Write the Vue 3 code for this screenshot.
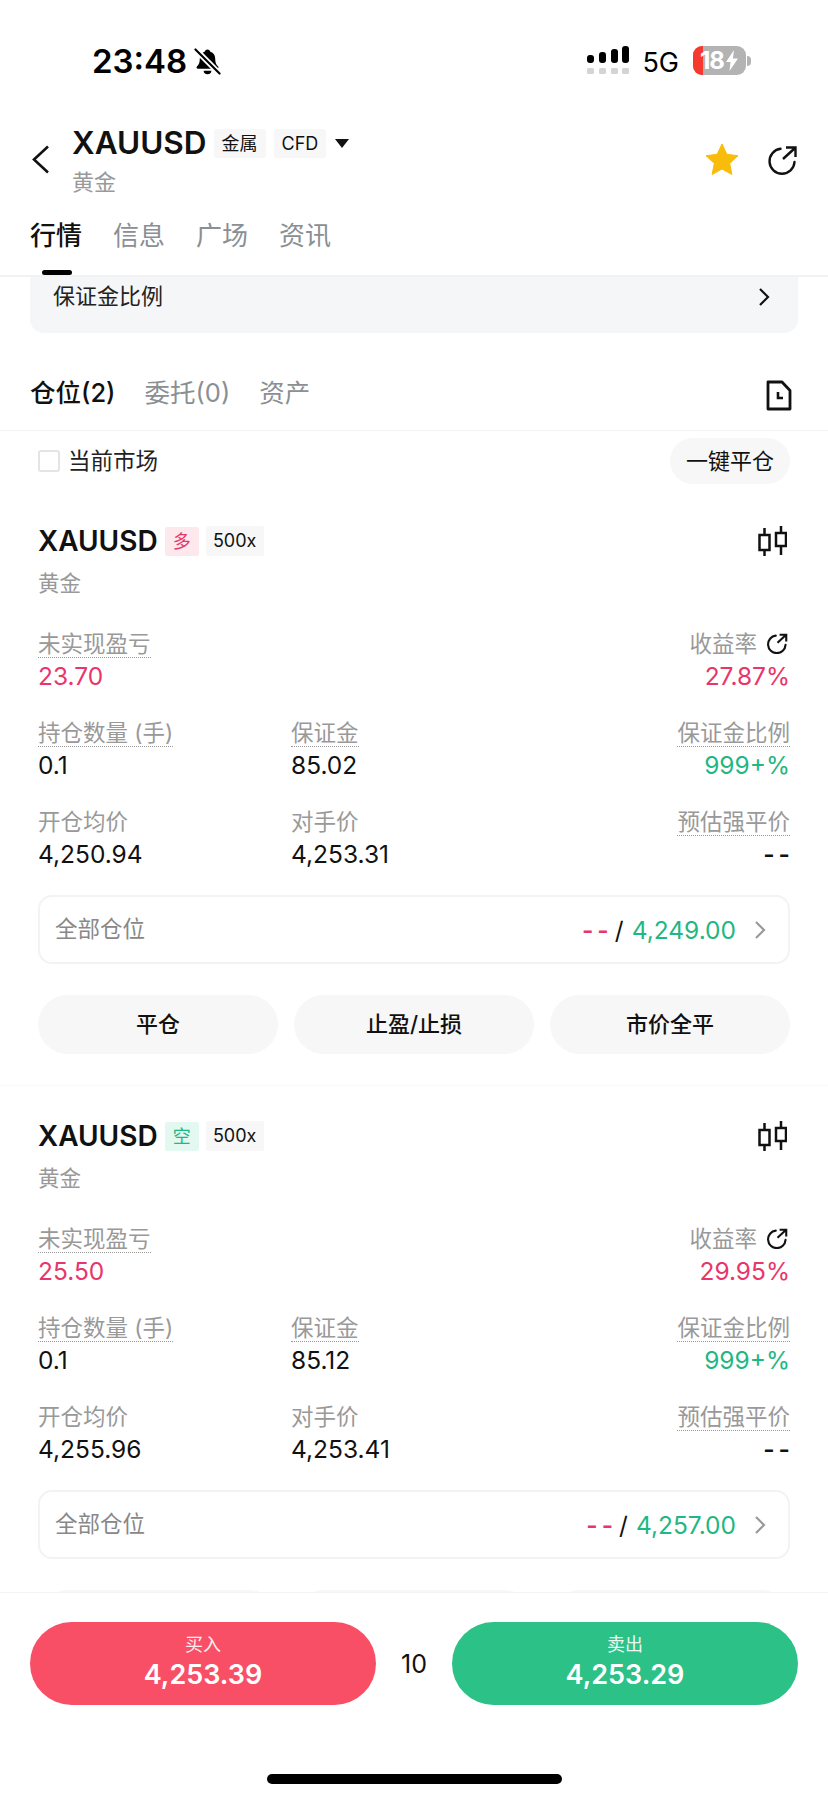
<template>
  <div class="page">
    <div class="status-bar">
      <div class="clock">
        <span class="time">23:48</span>
        <svg class="bell" width="27" height="29" viewBox="0 0 28 29">
          <path d="M14 2c1.600 0 2.700 1 3 2.400 3.200 1 5 3.700 5 7.200 0 4 .8 6 3 8.200.8.900.2 2.200-1 2.200H4c-1.200 0-1.800-1.300-1-2.200 2.200-2.200 3-4.200 3-8.200 0-3.500 1.800-6.200 5-7.200C11.300 3 12.400 2 14 2z" fill="#000" />
          <path d="M10 24h8a4 3.600 0 0 1-8 0z" fill="#000" />
          <path d="M1 1.500 27 27.500" stroke="#fff" stroke-width="6" />
          <path d="M1.500 2 26.500 27" stroke="#000" stroke-width="2.200" stroke-linecap="round" />
        </svg>
      </div>
      <div class="status-right">
        <div class="signal">
          <div class="signal-row">
            <i v-for="h in [8, 11, 14, 17]" :key="h" class="bar" :style="{ height: h + 'px' }"></i>
          </div>
          <div class="signal-row second">
            <i v-for="n in 4" :key="n" class="dot"></i>
          </div>
        </div>
        <span class="net">5G</span>
        <div class="battery">
          <div class="battery-body">
            <i class="battery-fill"></i>
            <span class="battery-num">18</span>
            <svg class="bolt" width="12" height="21" viewBox="0 0 12 21">
              <path d="M8 0 0 12h4.500L3.500 21 12 8.500H7z" fill="#fff" />
            </svg>
          </div>
          <i class="battery-nub"></i>
        </div>
      </div>
    </div>

    <div class="header">
      <svg class="back" width="18" height="29" viewBox="0 0 18 29">
        <path d="M16 1.500 2 14.500l14 13" fill="none" stroke="#111" stroke-width="2.600" />
      </svg>
      <div class="header-main">
        <div class="header-title">
          <span class="symbol">XAUUSD</span>
          <span class="chip">金属</span>
          <span class="chip">CFD</span>
          <i class="caret"></i>
        </div>
        <div class="header-sub">黄金</div>
      </div>
      <svg class="star" width="34" height="32" viewBox="0 0 34 32">
        <path d="M17 1l4.800 10.300 11.200 1.400-8.300 7.700 2.200 11.100L17 26l-9.900 5.500 2.200-11.100L1 12.700l11.200-1.400z" fill="#f9bc0b" stroke="#f9bc0b" stroke-linejoin="round" />
      </svg>
      <svg class="share" width="30" height="30" viewBox="0 0 30 30">
        <path d="M12.500 3.800A12.500 12.500 0 1 0 26.500 17" fill="none" stroke="#111" stroke-width="2.400" stroke-linecap="round" />
        <path d="M15 14 27 3M18 2.500h9.500V12" fill="none" stroke="#111" stroke-width="2.400" />
      </svg>
    </div>

    <div class="main-tabs">
      <span v-for="(t, i) in mainTabs" :key="t" class="main-tab" :class="{ active: i === 0 }">{{ t }}</span>
    </div>

    <div class="content">
      <div class="margin-card">
        <span>保证金比例</span>
        <svg width="12" height="20" viewBox="0 0 12 20">
          <path d="M2 2l8 8-8 8" fill="none" stroke="#111" stroke-width="2.200" />
        </svg>
      </div>

      <div class="sub-tabs">
        <span v-for="(t, i) in subTabs" :key="t" class="sub-tab" :class="{ active: i === 0 }">{{ t }}</span>
        <svg class="doc" width="26" height="31" viewBox="0 0 26 31">
          <path d="M2 2h14l8 8.500V29H2z" fill="none" stroke="#111" stroke-width="2.800" stroke-linejoin="round" />
          <path d="M12 12v6h5" fill="none" stroke="#111" stroke-width="2.600" />
        </svg>
      </div>

      <div class="filter-row">
        <i class="checkbox"></i>
        <span class="filter-text">当前市场</span>
        <span class="close-all">一键平仓</span>
      </div>

      <div v-for="p in positions" :key="p.side" class="position">
        <div class="pos-title">
          <span class="pos-symbol">XAUUSD</span>
          <span class="side-tag" :class="p.side === '多' ? 'long' : 'short'">{{ p.side }}</span>
          <span class="lever-tag">500x</span>
          <svg class="candle" width="30" height="32" viewBox="0 0 30 32">
            <path d="M2.500 10h10v15h-10zM7.500 3v7M7.500 25v6M19 8h10v13H19zM24 1v7M24 21v9" fill="none" stroke="#111" stroke-width="2.500" />
          </svg>
        </div>
        <div class="pos-sub">黄金</div>

        <div class="stats">
          <div class="stat">
            <span class="label dotted">未实现盈亏</span>
            <span class="value red">{{ p.pnl }}</span>
          </div>
          <div class="stat"></div>
          <div class="stat right">
            <span class="label">收益率
              <svg class="rate-icon" width="21" height="21" viewBox="0 0 30 30">
                <path d="M12.500 3.800A12.500 12.500 0 1 0 26.500 17" fill="none" stroke="#111" stroke-width="3" stroke-linecap="round" />
                <path d="M15 14 27 3M18 2.500h9.500V12" fill="none" stroke="#111" stroke-width="3" />
              </svg>
            </span>
            <span class="value red">{{ p.rate }}</span>
          </div>

          <div class="stat">
            <span class="label dotted">持仓数量 (手)</span>
            <span class="value">0.1</span>
          </div>
          <div class="stat">
            <span class="label dotted">保证金</span>
            <span class="value">{{ p.margin }}</span>
          </div>
          <div class="stat right">
            <span class="label dotted">保证金比例</span>
            <span class="value green">999+%</span>
          </div>

          <div class="stat">
            <span class="label">开仓均价</span>
            <span class="value">{{ p.open }}</span>
          </div>
          <div class="stat">
            <span class="label">对手价</span>
            <span class="value">{{ p.counter }}</span>
          </div>
          <div class="stat right">
            <span class="label dotted">预估强平价</span>
            <span class="value dashes">--</span>
          </div>
        </div>

        <div class="all-box">
          <span class="all-label">全部仓位</span>
          <span class="all-values">
            <span class="dashes red">--</span>
            <span class="slash">/</span>
            <span class="green">{{ p.stop }}</span>
          </span>
          <svg class="all-arrow" width="12" height="20" viewBox="0 0 12 20">
            <path d="M2 2l8 8-8 8" fill="none" stroke="#999" stroke-width="2.200" />
          </svg>
        </div>

        <div class="actions">
          <span v-for="a in actions" :key="a" class="action">{{ a }}</span>
        </div>
      </div>
    </div>

    <div class="bottom">
      <div class="trade-row">
        <div class="trade buy">
          <span class="trade-label">买入</span>
          <span class="trade-price">4,253.39</span>
        </div>
        <span class="qty">10</span>
        <div class="trade sell">
          <span class="trade-label">卖出</span>
          <span class="trade-price">4,253.29</span>
        </div>
      </div>
      <i class="home-bar"></i>
    </div>
  </div>
</template>

<script setup>
const mainTabs = ['行情', '信息', '广场', '资讯']
const subTabs = ['仓位(2)', '委托(0)', '资产']
const actions = ['平仓', '止盈/止损', '市价全平']

const positions = [
  { side: '多', pnl: '23.70', rate: '27.87%', margin: '85.02', open: '4,250.94', counter: '4,253.31', stop: '4,249.00' },
  { side: '空', pnl: '25.50', rate: '29.95%', margin: '85.12', open: '4,255.96', counter: '4,253.41', stop: '4,257.00' },
]
</script>

<style>
html, body {
  margin: 0;
  background: #fff;
}
</style>

<style scoped>
.page {
  width: 828px;
  height: 1800px;
  display: flex;
  flex-direction: column;
  overflow: hidden;
  background: #fff;
  color: #111;
  font-family: Inter, "Noto Sans CJK SC", sans-serif;
}

i {
  display: block;
}

/* status bar */
.status-bar {
  height: 126px;
  flex: none;
  box-sizing: border-box;
  padding: 46px 77px 0 92px;
  display: flex;
  justify-content: space-between;
  align-items: flex-start;
}

.clock {
  display: flex;
  align-items: center;
  gap: 7px;
  height: 30px;
}

.time {
  font-size: 33px;
  font-weight: 600;
  line-height: 30px;
  color: #000;
}

.status-right {
  display: flex;
  align-items: flex-start;
  height: 30px;
}

.signal {
  width: 42px;
  margin-right: 13px;
}

.signal-row {
  height: 17px;
  display: flex;
  justify-content: space-between;
  align-items: flex-end;
}

.signal-row.second {
  height: 6px;
  margin-top: 5px;
}

.bar {
  width: 7px;
  background: #000;
  border-radius: 3px;
}

.dot {
  width: 7px;
  height: 6px;
  background: #d4d4d4;
  border-radius: 1.500px;
}

.net {
  font-size: 27px;
  line-height: 34px;
  margin-right: 14px;
  color: #000;
}

.battery {
  display: flex;
  align-items: center;
  height: 29px;
}

.battery-body {
  position: relative;
  width: 53px;
  height: 29px;
  box-sizing: border-box;
  background: #b3b3b3;
  border-radius: 9px;
  overflow: hidden;
  display: flex;
  align-items: center;
  padding-left: 7px;
}

.battery-fill {
  position: absolute;
  left: 0;
  top: 0;
  width: 10px;
  height: 29px;
  background: #f5392c;
}

.battery-num {
  position: relative;
  color: #fff;
  font-size: 24px;
  font-weight: 700;
  line-height: 29px;
  letter-spacing: -1px;
}

.bolt {
  position: relative;
  margin-left: 2px;
}

.battery-nub {
  width: 4px;
  height: 10px;
  background: #b3b3b3;
  border-radius: 0 4px 4px 0;
  margin-left: 1px;
}

/* header */
.header {
  height: 66px;
  flex: none;
  display: flex;
  align-items: flex-start;
  padding-left: 32px;
}

.back {
  margin: 19px 22px 0 0;
  flex: none;
}

.header-main {
  flex: 1;
  margin-top: 1px;
}

.header-title {
  display: flex;
  align-items: center;
  height: 32px;
}

.symbol {
  font-size: 31.500px;
  font-weight: 600;
  line-height: 32px;
  margin-right: 7px;
}

.chip {
  height: 29px;
  padding: 0 8px;
  margin-right: 8px;
  background: #f7f7f7;
  font-size: 18px;
  line-height: 29px;
  border-radius: 3px;
}

.caret {
  width: 0;
  height: 0;
  margin-left: 1px;
  border-left: 7px solid transparent;
  border-right: 7px solid transparent;
  border-top: 9px solid #111;
}

.header-sub {
  font-size: 22px;
  line-height: 30px;
  margin-top: 8px;
  color: #999;
}

.star {
  flex: none;
  margin: 17px 29px 0 0;
}

.share {
  flex: none;
  margin: 19px 30px 0 0;
}

/* main tabs */
.main-tabs {
  height: 85px;
  flex: none;
  box-sizing: border-box;
  padding: 0 0 0 30px;
  display: flex;
  gap: 31px;
  border-bottom: 2px solid #f0f2f4;
  align-items: flex-start;
}

.main-tab {
  position: relative;
  width: 52px;
  font-size: 26px;
  line-height: 36px;
  margin-top: 26px;
  white-space: nowrap;
  color: #8a8f94;
}

.main-tab.active {
  color: #111;
  font-weight: 500;
}

.main-tab.active::after {
  content: "";
  position: absolute;
  left: 12px;
  top: 52px;
  width: 30px;
  height: 5px;
  border-radius: 3px;
  background: #000;
}

/* scrolling content */
.content {
  flex: 1;
  min-height: 0;
  overflow: hidden;
}

.margin-card {
  margin: 0 30px;
  height: 56px;
  box-sizing: border-box;
  padding: 0 28px 22px 23px;
  display: flex;
  justify-content: space-between;
  align-items: center;
  background: #f5f6f8;
  border-radius: 0 0 14px 14px;
  font-size: 22px;
  color: #222;
}

.margin-card svg {
  margin-top: 6px;
}

.sub-tabs {
  height: 98px;
  box-sizing: border-box;
  padding: 42px 36px 0 30px;
  display: flex;
  align-items: flex-start;
  gap: 29px;
  border-bottom: 1px solid #f3f3f3;
}

.sub-tab {
  font-size: 25.500px;
  line-height: 36px;
  color: #8a8f94;
}

.sub-tab.active {
  color: #111;
  font-weight: 500;
}

.doc {
  margin-left: auto;
  margin-top: 5px;
}

.filter-row {
  height: 60px;
  box-sizing: border-box;
  padding: 7px 38px;
  display: flex;
  align-items: center;
}

.checkbox {
  width: 22px;
  height: 22px;
  box-sizing: border-box;
  border: 2px solid #e4e4e4;
  border-radius: 3px;
  margin-right: 8px;
}

.filter-text {
  font-size: 22.500px;
  line-height: 30px;
  margin-top: -1px;
  color: #222;
}

.close-all {
  margin-left: auto;
  width: 120px;
  height: 46px;
  line-height: 46px;
  text-align: center;
  background: #f7f7f7;
  border-radius: 23px;
  font-size: 22px;
}

/* position card */
.position {
  height: 595px;
  box-sizing: border-box;
  padding: 34px 38px 0;
  border-bottom: 1px solid #fafafa;
}

.pos-title {
  height: 32px;
  display: flex;
  align-items: center;
}

.pos-symbol {
  font-size: 28px;
  font-weight: 600;
  margin-right: 7px;
}

.side-tag {
  width: 34px;
  height: 29px;
  line-height: 29px;
  text-align: center;
  font-size: 18px;
  margin-right: 7px;
  border-radius: 2px;
}

.side-tag.long {
  color: #e8356a;
  background: #fde8ee;
}

.side-tag.short {
  color: #1fb783;
  background: #e3f8f0;
}

.lever-tag {
  width: 58px;
  height: 30px;
  line-height: 30px;
  text-align: center;
  font-size: 18px;
  background: #f7f7f7;
  border-radius: 2px;
}

.candle {
  margin-left: auto;
  margin-right: 3px;
}

.pos-sub {
  margin-top: 11px;
  font-size: 21.500px;
  line-height: 30px;
  color: #999;
}

.stats {
  margin-top: 33px;
  display: grid;
  grid-template-columns: 253px 1fr auto;
  row-gap: 28px;
}

.stat {
  height: 61px;
  display: flex;
  flex-direction: column;
  align-items: flex-start;
}

.stat.right {
  align-items: flex-end;
}

.label {
  height: 27px;
  box-sizing: border-box;
  padding-bottom: 2px;
  font-size: 22.500px;
  line-height: 25px;
  color: #999;
  white-space: nowrap;
  display: flex;
  align-items: center;
  gap: 10px;
}

.label.dotted {
  border-bottom: 1.500px dotted #999;
}

.rate-icon {
  margin-right: 2px;
}

.value {
  margin-top: 2px;
  font-size: 24.500px;
  line-height: 32px;
  color: #111;
}

.red {
  color: #e8356a;
}

.green {
  color: #1fb783;
}

.dashes {
  letter-spacing: 4px;
  font-weight: 600;
}

.value.dashes {
  margin-right: -4px;
}

.value.red {
  color: #e8356a;
}

.value.green {
  color: #1fb783;
}

.all-box {
  margin-top: 25px;
  height: 69px;
  box-sizing: border-box;
  padding: 0 22px 0 15px;
  display: flex;
  align-items: center;
  border: 2px solid #f3f3f3;
  border-radius: 14px;
}

.all-label {
  font-size: 22.500px;
  line-height: 30px;
  margin-top: -2px;
  color: #888;
}

.all-values {
  margin-left: auto;
  margin-right: 18px;
  display: flex;
  align-items: center;
  gap: 8px;
  font-size: 24.500px;
}

.all-values .dashes {
  margin-right: -6px;
}

.actions {
  margin-top: 31px;
  display: grid;
  grid-template-columns: repeat(3, 1fr);
  gap: 16px;
}

.action {
  height: 59px;
  line-height: 59px;
  text-align: center;
  background: #f7f7f7;
  border-radius: 30px;
  font-size: 22px;
  font-weight: 500;
}

/* bottom bar */
.bottom {
  height: 207px;
  flex: none;
  background: #fff;
  border-top: 1px solid #f3f3f3;
  display: flex;
  flex-direction: column;
  align-items: center;
}

.trade-row {
  margin-top: 29px;
  width: 768px;
  display: flex;
  align-items: center;
  justify-content: space-between;
}

.trade {
  width: 346px;
  height: 83px;
  border-radius: 42px;
  color: #fff;
  display: flex;
  flex-direction: column;
  align-items: center;
  justify-content: center;
}

.buy {
  background: #f94f66;
}

.sell {
  background: #2cc187;
}

.trade-label {
  font-size: 18px;
  line-height: 24px;
  margin-top: -3px;
  opacity: 0.9;
}

.trade-price {
  font-size: 27px;
  font-weight: 600;
  line-height: 34px;
  margin-top: 1px;
}

.qty {
  font-size: 25px;
  color: #111;
}

.home-bar {
  margin-top: 69px;
  width: 295px;
  height: 10px;
  border-radius: 5px;
  background: #000;
}
</style>
